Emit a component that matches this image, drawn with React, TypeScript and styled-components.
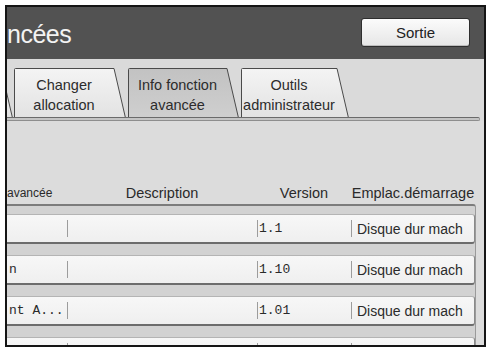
import React, { useId } from 'react';
import styled, { createGlobalStyle } from 'styled-components';

const TABS = [
  { label: ['Changer', 'allocation'], width: 112, active: false },
  { label: ['Info fonction', 'avancée'], width: 111, active: true },
  { label: ['Outils', 'administrateur'], width: 108, active: false },
];

const ROWS = [
  { name: '', version: '1.1', place: 'Disque dur mach' },
  { name: 'n', version: '1.10', place: 'Disque dur mach' },
  { name: 'nt A...', version: '1.01', place: 'Disque dur mach' },
  { name: '', version: '', place: '' },
];

const GlobalStyle = createGlobalStyle`
  body {
    margin: 0;
    background: #ffffff;
    font-family: "Liberation Sans", Arial, sans-serif;
  }
`;

function TabShape({ width, active }: { width: number; active: boolean }) {
  const id = useId().replace(/:/g, '');
  const h = 50;
  return (
    <ShapeSvg width={width} height={h} viewBox={`0 0 ${width} ${h}`}>
      <defs>
        <linearGradient id={id} x1="0" y1="0" x2="0" y2="1">
          <stop offset="0" stopColor={active ? '#c2c2c2' : '#f4f4f4'} />
          <stop offset="1" stopColor={active ? '#cfcfcf' : '#e2e2e2'} />
        </linearGradient>
      </defs>
      <path
        d={`M0.5 ${h} L0.5 1.5 Q0.5 0.5 1.5 0.5 L${width - 12} 0.5 L${width - 0.5} ${h}`}
        fill={`url(#${id})`}
        stroke="#4a4a4a"
        strokeWidth="1"
      />
    </ShapeSvg>
  );
}

export default function App() {
  return (
    <Page>
      <GlobalStyle />
      <Frame>
        <TitleBar>
          <Title>ncées</Title>
          <ExitButton>Sortie</ExitButton>
        </TitleBar>
        <TabArea>
          <TabRow>
            <Tab $width={112} $partial>
              <TabShape width={112} active={false} />
            </Tab>
            {TABS.map((t) => (
              <Tab key={t.label[0]} $width={t.width}>
                <TabShape width={t.width} active={t.active} />
                <TabLabel>
                  <span>{t.label[0]}</span>
                  <span>{t.label[1]}</span>
                </TabLabel>
              </Tab>
            ))}
          </TabRow>
          <TabBar />
        </TabArea>
        <Content>
          <HeaderRow>
            <HeadCell $small>avancée</HeadCell>
            <HeadCell $center>Description</HeadCell>
            <HeadCell $center>Version</HeadCell>
            <HeadCell $center>Emplac.démarrage</HeadCell>
          </HeaderRow>
          <List>
            {ROWS.map((r, i) => (
              <Row key={i}>
                <Cell $mono>{r.name}</Cell>
                <Cell $sep />
                <Cell $sep $mono>
                  {r.version}
                </Cell>
                <Cell $sep $pad={6}>
                  {r.place}
                </Cell>
              </Row>
            ))}
          </List>
        </Content>
      </Frame>
    </Page>
  );
}

const Page = styled.div`
  padding: 5px 0 0 5px;
`;

const Frame = styled.div`
  box-sizing: border-box;
  width: 481px;
  height: 342px;
  border: 2px solid #151515;
  display: flex;
  flex-direction: column;
  overflow: hidden;
  background: #dcdcdc;
`;

const TitleBar = styled.div`
  height: 52px;
  flex: none;
  background: #525252;
  display: flex;
  align-items: center;
  justify-content: space-between;
  padding-right: 14px;
  overflow: hidden;
`;

const Title = styled.div`
  margin-left: 0;
  margin-top: 3px;
  font-size: 25px;
  color: #f3f3f3;
  letter-spacing: -0.5px;
`;

const ExitButton = styled.button`
  width: 109px;
  height: 29px;
  margin-top: -1px;
  border: 1px solid #2e2e2e;
  border-radius: 3px;
  background: linear-gradient(#fbfbfb, #e6e6e6);
  box-shadow: inset 0 -1px 0 #bdbdbd;
  font-family: "Liberation Sans", Arial, sans-serif;
  font-size: 15px;
  color: #222;
  padding: 0;
`;

const TabArea = styled.div`
  flex: none;
  padding-top: 9px;
  background: #dadada;
`;

const TabRow = styled.div`
  display: flex;
  gap: 2px;
  height: 49px;
  overflow: hidden;
`;

const Tab = styled.div<{ $width: number; $partial?: boolean }>`
  position: relative;
  flex: none;
  width: ${(p) => p.$width}px;
  height: 50px;
  margin-left: ${(p) => (p.$partial ? -106 : 0)}px;
  margin-right: ${(p) => (p.$partial ? -1 : 0)}px;
`;

const ShapeSvg = styled.svg`
  position: absolute;
  left: 0;
  top: 0;
  display: block;
`;

const TabLabel = styled.div`
  position: relative;
  display: flex;
  flex-direction: column;
  align-items: center;
  padding: 7px 12px 0 0;
  font-size: 14.5px;
  line-height: 20px;
  color: #2c2c2c;
  white-space: nowrap;
`;

const TabBar = styled.div`
  height: 2px;
  width: 472px;
  border-top: 1px solid #6a6a6a;
  border-bottom: 1px solid #8e8e8e;
  border-right: 1px solid #8e8e8e;
  border-radius: 0 3px 3px 0;
  background: #c4c4c4;
`;

const Content = styled.div`
  flex: 1;
  min-height: 0;
  overflow: hidden;
  padding-top: 62px;
`;

const grid = `
  display: grid;
  grid-template-columns: 60px 190px 94px 124px;
  width: 468px;
`;

const HeaderRow = styled.div`
  ${grid}
  height: 20px;
  align-items: center;
`;

const HeadCell = styled.div<{ $center?: boolean; $small?: boolean }>`
  text-align: ${(p) => (p.$center ? 'center' : 'left')};
  font-size: ${(p) => (p.$small ? 12 : 14.5)}px;
  color: #2a2a2a;
  white-space: nowrap;
`;

const List = styled.div`
  margin-top: 1px;
  width: 468px;
  border-top: 2px solid #7c7c7c;
  border-right: 1px solid #9a9a9a;
  border-radius: 0 3px 0 0;
  background: #d2d2d2;
  padding-top: 8px;
  display: flex;
  flex-direction: column;
  gap: 11px;
`;

const Row = styled.div`
  ${grid}
  box-sizing: border-box;
  height: 30px;
  background: linear-gradient(#f7f7f7, #efefef);
  border-top: 1px solid #b4b4b4;
  border-right: 1px solid #8a8a8a;
  border-bottom: 2px solid #6c6c6c;
  border-radius: 0 3px 3px 0;
  align-items: center;
`;

const Cell = styled.div<{ $sep?: boolean; $mono?: boolean; $pad?: number }>`
  position: relative;
  height: 100%;
  display: flex;
  align-items: center;
  padding-left: ${(p) => p.$pad ?? 2}px;
  font-family: ${(p) =>
    p.$mono ? '"Liberation Mono", "DejaVu Sans Mono", monospace' : '"Liberation Sans", Arial, sans-serif'};
  font-size: ${(p) => (p.$mono ? 13 : 14)}px;
  color: #2a2a2a;
  white-space: nowrap;
  overflow: hidden;

  &::before {
    content: '';
    display: ${(p) => (p.$sep ? 'block' : 'none')};
    position: absolute;
    left: 0;
    top: 5px;
    bottom: 5px;
    width: 1px;
    background: #9c9c9c;
  }
`;
